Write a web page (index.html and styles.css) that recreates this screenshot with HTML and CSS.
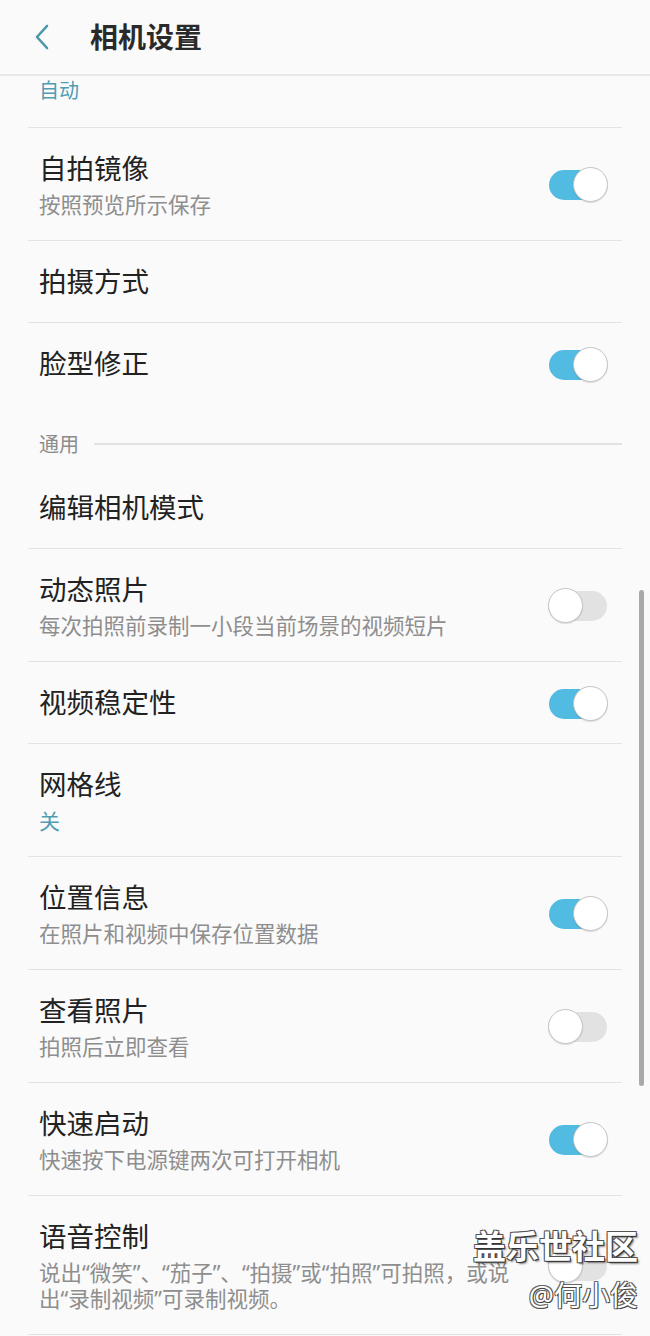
FILE: index.html
```html
<!DOCTYPE html>
<html lang="zh-CN">
<head>
    <meta charset="UTF-8">
    <meta name="viewport" content="width=device-width, initial-scale=1.0">
    <title>相机设置</title>
    <link rel="stylesheet" href="styles.css">
</head>
<body>

<div class="header">
    <span class="back">
        <svg width="20" height="26" viewBox="0 0 20 26"><path d="M14 2 L4 13 L14 24" fill="none" stroke="#4a97aa" stroke-width="2.6" stroke-linecap="round" stroke-linejoin="round"/></svg>
    </span>
    <h1>相机设置</h1>
</div>

<div class="list">
    <div class="section-label first">自动</div>
    <div class="divider"></div>

    <div class="item">
        <div class="text">
            <div class="title">自拍镜像</div>
            <div class="sub">按照预览所示保存</div>
        </div>
        <span class="switch on"></span>
    </div>
    <div class="item">
        <div class="text"><div class="title">拍摄方式</div></div>
    </div>
    <div class="item last">
        <div class="text"><div class="title">脸型修正</div></div>
        <span class="switch on"></span>
    </div>

    <div class="section-label line">通用</div>

    <div class="item">
        <div class="text"><div class="title">编辑相机模式</div></div>
    </div>
    <div class="item">
        <div class="text">
            <div class="title">动态照片</div>
            <div class="sub">每次拍照前录制一小段当前场景的视频短片</div>
        </div>
        <span class="switch"></span>
    </div>
    <div class="item">
        <div class="text"><div class="title">视频稳定性</div></div>
        <span class="switch on"></span>
    </div>
    <div class="item">
        <div class="text">
            <div class="title">网格线</div>
            <div class="sub value">关</div>
        </div>
    </div>
    <div class="item">
        <div class="text">
            <div class="title">位置信息</div>
            <div class="sub">在照片和视频中保存位置数据</div>
        </div>
        <span class="switch on"></span>
    </div>
    <div class="item">
        <div class="text">
            <div class="title">查看照片</div>
            <div class="sub">拍照后立即查看</div>
        </div>
        <span class="switch"></span>
    </div>
    <div class="item">
        <div class="text">
            <div class="title">快速启动</div>
            <div class="sub">快速按下电源键两次可打开相机</div>
        </div>
        <span class="switch on"></span>
    </div>
    <div class="item">
        <div class="text">
            <div class="title">语音控制</div>
            <div class="sub">说出“微笑”、“茄子”、“拍摄”或“拍照”可拍照，或说出“录制视频”可录制视频。</div>
        </div>
        <span class="switch"></span>
    </div>
</div>

<div class="scrollbar"></div>

<div class="watermark">
    <div class="wm-main">盖乐世社区</div>
    <div class="wm-user">@何小俊</div>
</div>

</body>
</html>
```

FILE: styles.css
```css
body {
    margin: 0;
    background-color: #fafafa;
    font-family: "Noto Sans", "Noto Sans CJK SC", sans-serif;
    color: #222;
    overflow: hidden;
    height: 1336px;
}
.header {
    display: flex;
    align-items: center;
    height: 76px;
    border-bottom: 2px solid #e8e8e8;
    box-sizing: border-box;
}
.back {
    display: flex;
    margin-left: 33px;
    margin-top: -1px;
}
.header h1 {
    margin: 0 0 0 37px;
    font-size: 28px;
    font-weight: bold;
    color: #2a2a2a;
    line-height: 36px;
}
.list { margin: 0 28px; }
.divider { border-bottom: 1px solid #e3e3e3; }
.section-label {
    display: flex;
    align-items: center;
    padding-left: 11px;
    font-size: 20px;
    line-height: 26px;
    color: #8c8c8c;
}
.section-label.first {
    color: #4f9cb3;
    padding-top: 2px;
    padding-bottom: 23px;
}
.section-label.line {
    padding-top: 28px;
    padding-bottom: 9px;
}
.section-label.line::after {
    content: "";
    flex: 1;
    height: 2px;
    background: #e2e2e2;
    margin-left: 15px;
    margin-top: -2px;
}
.item {
    display: flex;
    align-items: center;
    padding: 23px 15px 22px 11px;
    border-bottom: 1px solid #e3e3e3;
}
.item.last { border-bottom: none; }
.text { flex: 1; }
.title {
    font-size: 27.5px;
    line-height: 36px;
    color: #222;
}
.sub {
    margin-top: 5px;
    font-size: 21.5px;
    line-height: 26px;
    color: #8e8e8e;
    max-width: 486px;
}
.sub.value { color: #4f9cb3; font-size: 21px; }
.switch {
    position: relative;
    width: 58px;
    height: 30px;
    border-radius: 15px;
    background: #e2e2e2;
    flex-shrink: 0;
    margin-top: 1px;
}
.switch::after {
    content: "";
    position: absolute;
    top: -3px;
    left: -1px;
    width: 33px;
    height: 33px;
    border-radius: 50%;
    background: #fff;
    border: 1px solid #c4c4c4;
    box-shadow: 0 1px 1px rgba(0,0,0,0.12);
}
.switch.on { background: #52bbe2; }
.switch.on::after { left: auto; right: -1px; }
.scrollbar {
    position: absolute;
    left: 639px;
    top: 590px;
    width: 5px;
    height: 496px;
    border-radius: 3px;
    background: #a9a9a9;
}
.watermark {
    position: absolute;
    right: 12px;
    top: 1225px;
    text-align: right;
    color: #fff;
}
.wm-main {
    font-size: 33px;
    font-weight: bold;
    line-height: 44px;
    text-shadow: 1px 1px 0 #333, -1px -1px 0 #555, 1px -1px 0 #555, -1px 1px 0 #555, 2px 2px 2px rgba(0,0,0,0.5);
}
.wm-user {
    font-size: 28px;
    line-height: 36px;
    margin-top: 8px;
    text-shadow: 1px 1px 0 #444, -1px -1px 0 #666, 1px -1px 0 #666, -1px 1px 0 #666;
}
```
